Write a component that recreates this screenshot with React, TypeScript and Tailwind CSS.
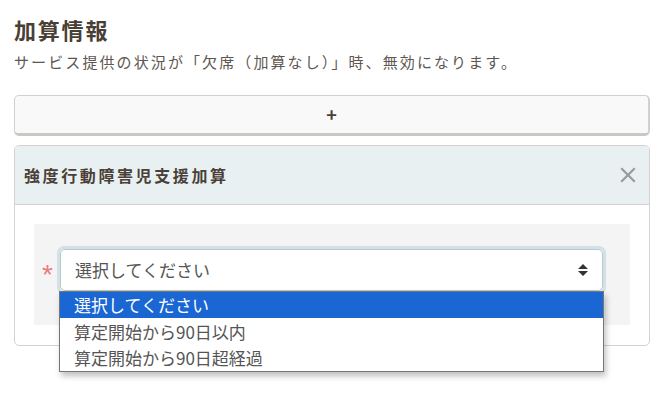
import React from 'react'

const font = "font-['Noto_Sans_CJK_JP','Noto_Sans',sans-serif]"

const options = ['選択してください', '算定開始から90日以内', '算定開始から90日超経過']

const App: React.FC = () => {
  return (
    <div className={`${font} min-h-[402px] bg-white pl-[14px] pr-[10px] pt-[13px] text-[#4a4038]`}>
      <h2 className="text-[22px] font-bold leading-[32px] tracking-[1.8px] text-[#4a3f35]">加算情報</h2>
      <p className="mt-[5px] text-[15px] leading-[24px] tracking-[2.1px] text-[#5e5650]">
        サービス提供の状況が「欠席（加算なし）」時、無効になります。
      </p>

      {/* add button */}
      <button className="mt-[21px] flex h-[41px] w-full items-center justify-center rounded-[5px] border border-[#d3d0cb] border-b-[3px] border-r-[2px] border-b-[#cbc8c4] bg-[#f9f9f9] text-[18px] font-bold text-[#4a4038]">
        +
      </button>

      {/* panel */}
      <div className="mt-[9px] rounded-[5px] border border-[#d6d3ce]">
        <div className="flex h-[59px] items-center justify-between rounded-t-[5px] border-b border-[#d6d3ce] bg-[#e8f0f2] pl-[9px] pr-[13px]">
          <span className="text-[16px] font-bold tracking-[2.6px] text-[#4a4038]">強度行動障害児支援加算</span>
          <svg width="16" height="16" viewBox="0 0 16 16" className="text-[#9a9a9a]">
            <path d="M2 2 L14 14 M14 2 L2 14" stroke="currentColor" strokeWidth="2.2" strokeLinecap="square" />
          </svg>
        </div>
        <div className="px-[19px] pb-[20px] pt-[19px]">
          <div className="flex items-start bg-[#f4f4f4] pb-[31px] pl-[8px] pr-[24px] pt-[22px]">
            <span className="mt-[19px] w-[15px] font-['Liberation_Sans',sans-serif] text-[28px] leading-[20px] text-[#ec7b7b]">*</span>
            <div className="relative flex-1">
              <div className="rounded-[7px] border-[3px] border-[#d2e1e5]">
                <div className="flex h-[42px] items-center justify-between rounded-[5px] border border-[#b5c9ce] bg-white pl-[14px] pr-[13px]">
                  <span className="text-[17px] text-[#555]">選択してください</span>
                  <svg width="12" height="14" viewBox="0 0 12 14" className="text-[#333]">
                    <path d="M6 1 L11 6 L1 6 Z M6 13 L11 8 L1 8 Z" fill="currentColor" />
                  </svg>
                </div>
              </div>
              {/* native-like dropdown */}
              <div className="absolute left-[2px] right-[2px] top-[45px] border border-[#777] bg-white shadow-[2px_4px_6px_rgba(0,0,0,0.25)]">
                {options.map((o, i) => (
                  <div
                    key={o}
                    className={`flex h-[26.3px] items-center pl-[14px] text-[17px] ${i === 0 ? 'bg-[#1a66d3] text-white' : 'text-[#555]'}`}
                  >
                    {o}
                  </div>
                ))}
              </div>
            </div>
          </div>
        </div>
      </div>
    </div>
  )
}

export default App
